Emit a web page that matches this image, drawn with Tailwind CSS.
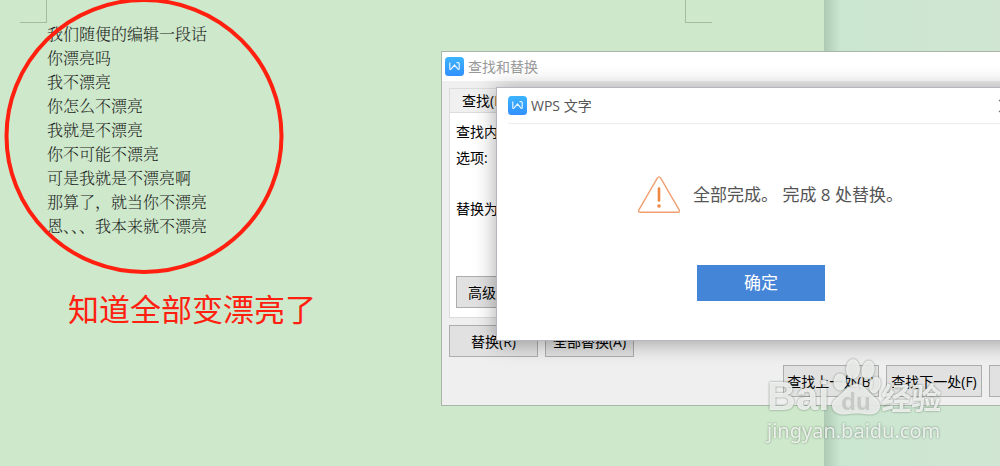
<!DOCTYPE html>
<html lang="zh-CN">
<head>
  <meta charset="UTF-8">
  <meta name="viewport" content="width=device-width, initial-scale=1.0">
  <title>WPS 文字 - 查找和替换</title>
  <script src="https://cdn.jsdelivr.net/npm/@tailwindcss/browser@4"></script>
</head>
<body class="relative flex h-screen overflow-hidden bg-[#cee8cb] font-['Open_Sans','Noto_Sans_CJK_SC',sans-serif] text-black">

  <!-- 文档页面 -->
  <main class="w-[824px] shrink-0">
    <div class="flex justify-between pl-5 pr-28">
      <span class="h-[23px] w-[27px] border-r border-b border-[#a3b9a1]"></span>
      <span class="h-[23px] w-[27px] border-l border-b border-[#a3b9a1]"></span>
    </div>
    <div class="-mt-px pl-[47px] font-['Noto_Serif_CJK_SC','Noto_Sans_CJK_SC',serif] text-[16px] leading-6 font-light text-[#1c241c]">
      <p>我们随便的编辑一段话</p>
      <p>你漂亮吗</p>
      <p>我不漂亮</p>
      <p>你怎么不漂亮</p>
      <p>我就是不漂亮</p>
      <p>你不可能不漂亮</p>
      <p>可是我就是不漂亮啊</p>
      <p>那算了，就当你不漂亮</p>
      <p>恩、、、我本来就不漂亮</p>
    </div>
    <p class="pt-[45px] pl-[68px] font-['Noto_Sans_CJK_SC',sans-serif] text-[31px] leading-[50px] text-[#ff2010]">知道全部变漂亮了</p>
  </main>

  <!-- 页面右侧的空白区 -->
  <div class="flex flex-1 bg-linear-to-r from-[#cae6d0] to-[#d0e6d3]">
    <div class="w-4 bg-linear-to-r from-[#aecab4] to-[#cae6d0]"></div>
  </div>

  <!-- 红圈 -->
  <svg class="absolute top-0 left-0" width="290" height="280" viewBox="0 0 290 280" fill="none" aria-hidden="true">
    <ellipse cx="144" cy="136" rx="137.5" ry="136" stroke="#ff2010" stroke-width="4"/>
  </svg>

  <!-- 查找和替换 -->
  <section class="absolute top-[51px] left-[441px] flex h-[355px] w-[652px] flex-col border border-[#a9b5a9] bg-[#efefef] text-[14px]">
    <header class="flex h-[29px] items-center gap-1 bg-white px-[3px] text-[#999]">
      <svg class="size-[19px]" viewBox="0 0 19 19" fill="none" aria-hidden="true">
        <defs>
          <linearGradient id="wps" x1="0" y1="0" x2="0" y2="1">
            <stop offset="0" stop-color="#3cb4ff"/>
            <stop offset="1" stop-color="#3290ff"/>
          </linearGradient>
        </defs>
        <rect width="19" height="19" rx="3.5" fill="url(#wps)"/>
        <path d="M4.800 5.600v6q0 1.500 1.200.5L9.500 8l3.500 4.100q1.200 1 1.200-.5v-5q0-1-1-1h-1.700" stroke="#e8f5ff" stroke-width="1.200"/>
      </svg>
      <h2>查找和替换</h2>
    </header>
    <div class="flex flex-1 flex-col px-[7px] pt-[7px] pb-2">
      <div class="flex">
        <button type="button" class="h-6 w-20 border border-b-0 border-[#dcdcdc] bg-[#f0f0f0] pl-3 text-left leading-6">查找(D)</button>
      </div>
      <div class="flex h-[206px] flex-col items-start border border-[#dcdcdc] bg-white px-1.5 pt-1.5 pb-[9px]">
        <p class="leading-[26px]">查找内容(N):</p>
        <p class="leading-[26px]">选项:</p>
        <p class="pt-[25px] leading-[26px]">替换为(I):</p>
        <button type="button" class="mt-auto h-8 w-[120px] border border-[#adadad] bg-[#e1e1e1] pl-[11px] text-left">高级搜索(M)</button>
      </div>
      <div class="mt-[7px] flex gap-[7px]">
        <button type="button" class="h-8 w-[89px] border border-[#adadad] bg-[#e1e1e1]">替换(R)</button>
        <button type="button" class="h-8 w-[89px] border border-[#adadad] bg-[#e1e1e1]">全部替换(A)</button>
      </div>
      <div class="mt-auto flex justify-end gap-[7px]">
        <button type="button" class="h-8 w-24 border border-[#adadad] bg-[#e1e1e1] whitespace-nowrap">查找上一处(B)</button>
        <button type="button" class="h-8 w-24 border border-[#adadad] bg-[#e1e1e1] whitespace-nowrap">查找下一处(F)</button>
        <button type="button" class="h-8 w-24 border border-[#adadad] bg-[#e1e1e1]">关闭</button>
      </div>
    </div>
  </section>

  <!-- 提示框 -->
  <section class="absolute top-[87px] left-[496px] flex h-[254px] w-[530px] flex-col border border-[#b4b7c2] bg-white px-[11px] text-[#555] shadow-[0_2px_20px_rgba(0,0,0,0.35)]">
    <header class="flex h-9 items-center gap-1 border-b border-[#ececec] text-[14px]">
      <svg class="size-[19px]" viewBox="0 0 19 19" fill="none" aria-hidden="true">
        <rect width="19" height="19" rx="3.5" fill="url(#wps)"/>
        <path d="M4.800 5.600v6q0 1.500 1.200.5L9.500 8l3.500 4.100q1.200 1 1.200-.5v-5q0-1-1-1h-1.700" stroke="#e8f5ff" stroke-width="1.200"/>
      </svg>
      <h2>WPS 文字</h2>
      <button type="button" aria-label="关闭" class="mr-0.5 ml-auto">
        <svg class="size-[14px]" viewBox="0 0 14 14" fill="none" aria-hidden="true">
          <path d="M1 1l12 12M13 1L1 13" stroke="#777" stroke-width="1.2"/>
        </svg>
      </button>
    </header>
    <div class="flex items-center gap-3 pt-[51px] pl-[129px] text-[17px]">
      <svg class="h-[40px] w-[44px]" viewBox="0 0 44 40" fill="none" aria-hidden="true">
        <path d="M20.3 3.2q1.7-2.6 3.4 0l18.4 31.6q1.2 2.4-1.4 2.4H3.3q-2.6 0-1.4-2.4z" stroke="#f0a070" stroke-width="1.4"/>
        <path d="M22 13.5v12" stroke="#ee8840" stroke-width="2.6" stroke-linecap="round"/>
        <circle cx="22" cy="31" r="1.8" fill="#ee8840"/>
      </svg>
      <p class="whitespace-nowrap">全部完成。 完成 8 处替换。</p>
    </div>
    <button type="button" class="mx-auto mt-auto mb-[39px] h-9 w-32 bg-[#4585d8] text-[17px] text-white">确定</button>
  </section>

  <!-- 百度经验水印 -->
  <div class="absolute top-[355px] left-[767px] text-white/80 drop-shadow-[0_0_1px_rgba(70,90,70,0.8)]">
    <div class="flex items-end">
      <span class="font-['Liberation_Sans',sans-serif] text-[40px] leading-[42px] font-bold">Bai</span>
      <svg class="h-[62px] w-[52px]" viewBox="0 0 52 62" aria-hidden="true">
        <g fill="currentColor">
          <ellipse cx="11" cy="27" rx="6.500" ry="8.500"/>
          <ellipse cx="24" cy="14" rx="7" ry="10"/>
          <ellipse cx="39" cy="15" rx="6.500" ry="9.500" transform="rotate(12 39 15)"/>
          <ellipse cx="46" cy="30" rx="5.500" ry="8.500" transform="rotate(15 46 30)"/>
          <path d="M28 29c6 0 9 5 13 9s10 7 10 13-5 9-12 8.500q-11-2-22 0C9 60 3 57 3 50c0-5 6-8 10-12s9-9 15-9z"/>
        </g>
        <text x="27" y="55" text-anchor="middle" class="fill-[#c6cac6] font-['Liberation_Sans',sans-serif] text-[24px] font-bold">du</text>
      </svg>
      <span class="font-['Noto_Sans_CJK_SC',sans-serif] text-[30px] leading-[42px] font-bold">经验</span>
    </div>
    <p class="font-['Noto_Sans',sans-serif] text-[20px] leading-7">jingyan.baidu.com</p>
  </div>

</body>
</html>
